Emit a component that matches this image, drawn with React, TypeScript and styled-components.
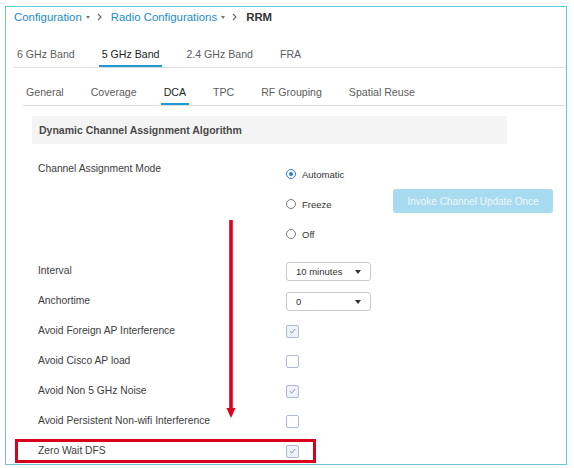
import styled, { createGlobalStyle } from "styled-components";

const GlobalStyle = createGlobalStyle`
  html, body {
    margin: 0;
    padding: 0;
    background: #fff;
  }
  body {
    font-family: "Liberation Sans", Arial, sans-serif;
    color: #3a3a3a;
  }
`;

const Frame = styled.div`
  position: relative;
  box-sizing: border-box;
  width: 562px;
  height: 459px;
  margin: 6px 0 0 5px;
  border: 1px solid #5ccfe2;
  border-left-color: #7bbde0;
  border-bottom-color: #6cc6dc;
  overflow: hidden;
`;

const Breadcrumb = styled.nav`
  display: flex;
  align-items: center;
  height: 20px;
  padding-left: 8px;
  font-size: 11.4px;
`;

const Crumb = styled.span<{ $current?: boolean }>`
  color: ${(p) => (p.$current ? "#333" : "#1b8ccc")};
  font-weight: ${(p) => (p.$current ? 700 : 400)};
`;

const Caret = styled.span`
  width: 0;
  height: 0;
  margin-left: 4px;
  border-left: 2.5px solid transparent;
  border-right: 2.5px solid transparent;
  border-top: 3px solid #777;
`;

const Chevron = styled.svg`
  width: 5px;
  height: 8px;
  margin: 0 9px 0 7px;
`;

const TabBar = styled.div<{ $indent: number; $height: number }>`
  display: flex;
  align-items: flex-end;
  gap: 21px;
  height: ${(p) => p.$height}px;
  margin-left: ${(p) => p.$indent}px;
  border-bottom: 1px solid #dedede;
`;

const Tab = styled.div<{ $active?: boolean }>`
  padding: 0 3px 4px;
  line-height: 14px;
  font-size: 10.6px;
  color: ${(p) => (p.$active ? "#1e1e1e" : "#5c5c5c")};
  border-bottom: 2px solid ${(p) => (p.$active ? "#1b9ad6" : "transparent")};
`;

const Content = styled.div`
  margin-left: 26px;
`;

const SectionHeader = styled.div`
  box-sizing: border-box;
  width: 475px;
  height: 28px;
  margin-top: 10px;
  padding-left: 7px;
  line-height: 28px;
  background: #f4f4f4;
  font-size: 10.5px;
  font-weight: 700;
  color: #4a4a4a;
`;

const Form = styled.div`
  margin-top: 15px;
  padding-left: 6px;
`;

const Row = styled.div<{ $top?: boolean }>`
  display: grid;
  grid-template-columns: 248px auto;
  align-items: ${(p) => (p.$top ? "start" : "center")};
  height: ${(p) => (p.$top ? "auto" : "30px")};
  margin-bottom: ${(p) => (p.$top ? 7 : 0)}px;
`;

const FieldLabel = styled.div<{ $top?: boolean }>`
  padding-top: ${(p) => (p.$top ? 3 : 0)}px;
  line-height: 14px;
  font-size: 10.3px;
  color: #3d3d3d;
`;

const ModeControl = styled.div`
  display: flex;
  align-items: flex-start;
`;

const RadioList = styled.div`
  display: flex;
  flex-direction: column;
  width: 107px;
`;

const RadioItem = styled.label`
  display: flex;
  align-items: center;
  gap: 6px;
  height: 30px;
  font-size: 9.5px;
  color: #333;
`;

const RadioDot = styled.span<{ $checked?: boolean }>`
  box-sizing: border-box;
  display: flex;
  align-items: center;
  justify-content: center;
  width: 10px;
  height: 10px;
  border-radius: 50%;
  border: ${(p) => (p.$checked ? "1.5px solid #2b7bd1" : "1px solid #7d7d7d")};
  background: #fff;

  &::after {
    content: "";
    display: ${(p) => (p.$checked ? "block" : "none")};
    width: 4px;
    height: 4px;
    border-radius: 50%;
    background: #2b7bd1;
  }
`;

const InvokeButton = styled.button`
  width: 160px;
  height: 24px;
  margin-top: 30px;
  border: none;
  border-radius: 3px;
  background: #a8dbef;
  color: #eef8fc;
  font-family: inherit;
  font-size: 10px;
`;

const Select = styled.div`
  box-sizing: border-box;
  display: flex;
  align-items: center;
  justify-content: space-between;
  width: 85px;
  height: 19px;
  padding: 0 9px 0 9px;
  border: 1px solid #c9c9c9;
  border-radius: 3px;
  font-size: 9.5px;
  color: #333;

  &::after {
    content: "";
    width: 0;
    height: 0;
    border-left: 3px solid transparent;
    border-right: 3px solid transparent;
    border-top: 4px solid #333;
    margin-top: 2px;
  }
`;

const Checkbox = styled.span<{ $checked?: boolean }>`
  box-sizing: border-box;
  display: flex;
  align-items: center;
  justify-content: center;
  width: 13px;
  height: 13px;
  border: 1px solid #adbad6;
  border-radius: 2px;
  background: ${(p) => (p.$checked ? "#eef2fb" : "#fff")};

  svg {
    width: 7px;
    height: 6px;
  }
`;

const Highlight = styled.div`
  position: absolute;
  left: 9px;
  top: 432px;
  width: 301px;
  height: 24px;
  box-sizing: border-box;
  border: 3px solid #d8001b;
  pointer-events: none;
`;

const Arrow = styled.svg`
  position: absolute;
  left: 220px;
  top: 213px;
  width: 10px;
  height: 198px;
  pointer-events: none;
`;

const Check = () => (
  <svg viewBox="0 0 7 6">
    <polyline points="0.8,3.2 2.7,5 6.2,1" fill="none" stroke="#8c8c8c" strokeWidth="1" />
  </svg>
);

const bandTabs = ["6 GHz Band", "5 GHz Band", "2.4 GHz Band", "FRA"];
const subTabs = ["General", "Coverage", "DCA", "TPC", "RF Grouping", "Spatial Reuse"];

const checks = [
  { label: "Avoid Foreign AP Interference", checked: true },
  { label: "Avoid Cisco AP load", checked: false },
  { label: "Avoid Non 5 GHz Noise", checked: true },
  { label: "Avoid Persistent Non-wifi Interference", checked: false },
  { label: "Zero Wait DFS", checked: true },
];

const App = () => {
  return (
    <>
      <GlobalStyle />
      <Frame>
        <Breadcrumb>
          <Crumb>Configuration</Crumb>
          <Caret />
          <Chevron viewBox="0 0 5 8">
            <polyline points="1,1 4,4 1,7" fill="none" stroke="#666" strokeWidth="1.1" />
          </Chevron>
          <Crumb>Radio Configurations</Crumb>
          <Caret />
          <Chevron viewBox="0 0 5 8">
            <polyline points="1,1 4,4 1,7" fill="none" stroke="#666" strokeWidth="1.1" />
          </Chevron>
          <Crumb $current>RRM</Crumb>
        </Breadcrumb>

        <TabBar $indent={8} $height={40}>
          {bandTabs.map((t) => (
            <Tab key={t} $active={t === "5 GHz Band"}>
              {t}
            </Tab>
          ))}
        </TabBar>

        <TabBar $indent={17} $height={37}>
          {subTabs.map((t) => (
            <Tab key={t} $active={t === "DCA"}>
              {t}
            </Tab>
          ))}
        </TabBar>

        <Content>
          <SectionHeader>Dynamic Channel Assignment Algorithm</SectionHeader>
          <Form>
            <Row $top>
              <FieldLabel $top>Channel Assignment Mode</FieldLabel>
              <ModeControl>
                <RadioList>
                  <RadioItem>
                    <RadioDot $checked />
                    Automatic
                  </RadioItem>
                  <RadioItem>
                    <RadioDot />
                    Freeze
                  </RadioItem>
                  <RadioItem>
                    <RadioDot />
                    Off
                  </RadioItem>
                </RadioList>
                <InvokeButton>Invoke Channel Update Once</InvokeButton>
              </ModeControl>
            </Row>
            <Row>
              <FieldLabel>Interval</FieldLabel>
              <Select>10 minutes</Select>
            </Row>
            <Row>
              <FieldLabel>Anchortime</FieldLabel>
              <Select>0</Select>
            </Row>
            {checks.map((c) => (
              <Row key={c.label}>
                <FieldLabel>{c.label}</FieldLabel>
                <Checkbox $checked={c.checked}>{c.checked && <Check />}</Checkbox>
              </Row>
            ))}
          </Form>
        </Content>

        <Highlight />
        <Arrow viewBox="0 0 10 198">
          <rect x="3.2" y="0" width="3.6" height="190" fill="#e1001b" />
          <polygon points="0.5,188 9.5,188 5,198" fill="#e1001b" />
        </Arrow>
      </Frame>
    </>
  );
};

export default App;
